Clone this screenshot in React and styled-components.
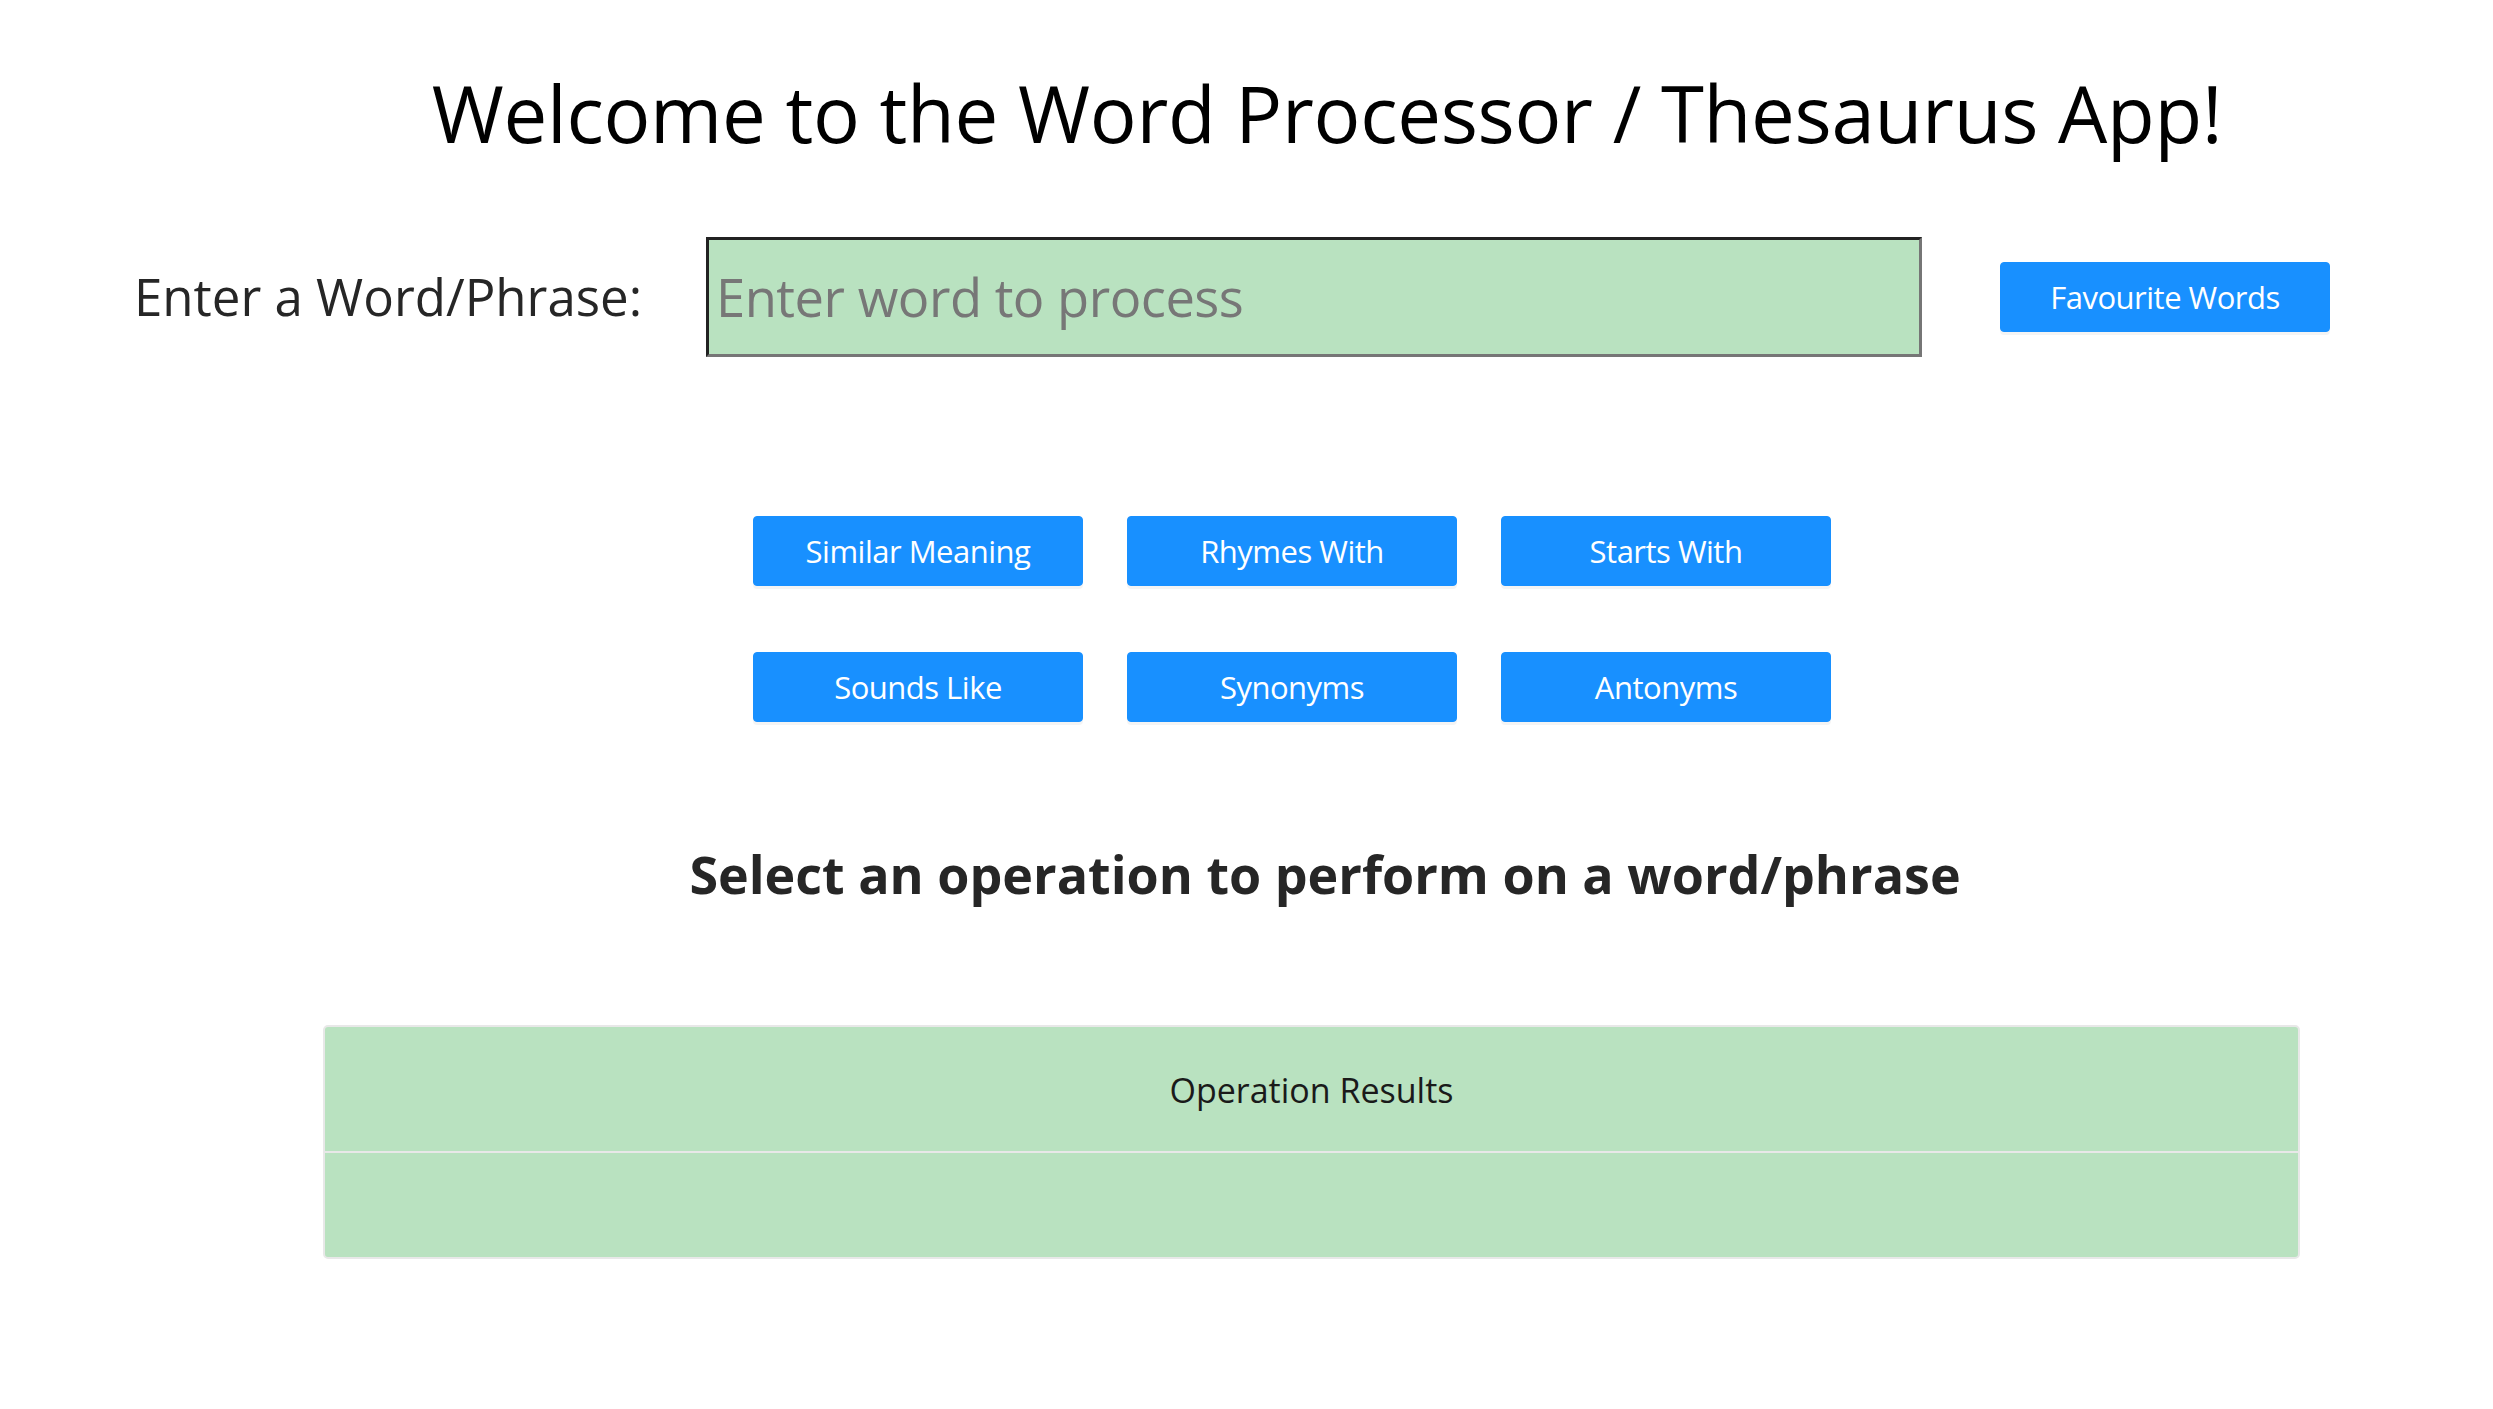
import React from "react";
import styled, { createGlobalStyle } from "styled-components";

const Global = createGlobalStyle`
  html, body { margin: 0; padding: 0; background: #fff; }
  body { font-family: "Open Sans", "Noto Sans", "Liberation Sans", sans-serif; }
  * { box-sizing: border-box; }
`;

const Page = styled.div`
  width: 2493px;
  min-height: 1409px;
  padding-top: 67px;
  display: flex;
  flex-direction: column;
`;

const Title = styled.h1`
  margin: 0;
  padding-left: 161px;
  text-align: center;
  font-size: 78px;
  font-weight: 500;
  line-height: 1.2;
  color: #000;
  letter-spacing: -0.3px;
`;

const InputRow = styled.div`
  display: flex;
  align-items: center;
  margin-top: 76px;
  padding-left: 134px;
`;

const Label = styled.label`
  width: 572px;
  font-size: 51px;
  font-weight: 500;
  line-height: 1.2;
  color: #262626;
`;

const WordInput = styled.input`
  width: 1216px;
  height: 120px;
  background: #b9e2c0;
  border-style: solid;
  border-width: 3px;
  border-color: #222 #767676 #767676 #222;
  padding: 0 7px;
  font-family: inherit;
  font-size: 52.5px;
  color: #262626;
  letter-spacing: -0.5px;
  outline: none;
  &::placeholder { color: #777; }
`;

const BlueButton = styled.button`
  width: 330px;
  height: 70px;
  background: #1890ff;
  border: 1px solid #1890ff;
  border-radius: 4px;
  box-shadow: 0 3px 0 rgba(0, 0, 0, 0.045);
  color: #fff;
  font-family: inherit;
  font-size: 31px;
  letter-spacing: -0.5px;
  padding: 0;
  cursor: pointer;
`;

const FavButton = styled(BlueButton)`
  margin-left: 78px;
`;

const OpsGrid = styled.div`
  display: grid;
  grid-template-columns: repeat(3, 330px);
  column-gap: 44px;
  row-gap: 66px;
  margin-top: 159px;
  margin-left: 753px;
`;

const Subtitle = styled.h2`
  margin: 121px 0 0;
  padding-left: 157px;
  text-align: center;
  font-size: 52px;
  font-weight: 700;
  line-height: 1.2;
  color: #262626;
`;

const ResultsTable = styled.table`
  margin-top: 120px;
  margin-left: 323px;
  width: 1977px;
  border-collapse: separate;
  border-spacing: 0;
  border: 2px solid #e8e8e8;
  border-radius: 5px;
  background: #b9e2c0;
  overflow: hidden;
`;

const HeadCell = styled.th`
  height: 126px;
  padding-top: 3px;
  font-size: 34px;
  font-weight: 500;
  color: #1a1a1a;
  text-align: center;
  border-bottom: 2px solid #e8e8e8;
`;

const BodyCell = styled.td`
  height: 104px;
`;

const ops = [
  "Similar Meaning",
  "Rhymes With",
  "Starts With",
  "Sounds Like",
  "Synonyms",
  "Antonyms",
];

export default function App() {
  return (
    <Page>
      <Global />
      <Title>Welcome to the Word Processor / Thesaurus App!</Title>
      <InputRow>
        <Label>Enter a Word/Phrase:</Label>
        <WordInput placeholder="Enter word to process" />
        <FavButton>Favourite Words</FavButton>
      </InputRow>
      <OpsGrid>
        {ops.map((o) => (
          <BlueButton key={o}>{o}</BlueButton>
        ))}
      </OpsGrid>
      <Subtitle>Select an operation to perform on a word/phrase</Subtitle>
      <ResultsTable>
        <thead>
          <tr>
            <HeadCell>Operation Results</HeadCell>
          </tr>
        </thead>
        <tbody>
          <tr>
            <BodyCell />
          </tr>
        </tbody>
      </ResultsTable>
    </Page>
  );
}
